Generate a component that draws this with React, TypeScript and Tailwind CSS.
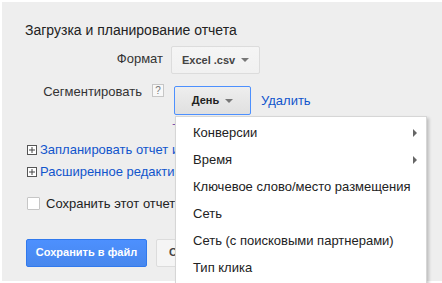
import React from "react";

const font = { fontFamily: '"Liberation Sans", Arial, sans-serif' };

function Caret() {
  return (
    <span className="ml-[6px] inline-block h-0 w-0 border-x-[4px] border-t-[4px] border-x-transparent border-t-[#777]" />
  );
}

function PlusBox() {
  return (
    <span className="mr-[3px] inline-flex h-[10px] w-[10px] items-center justify-center border border-[#555] bg-white">
      <svg width="8" height="8" viewBox="0 0 8 8">
        <path d="M4 1v6M1 4h6" stroke="#444" strokeWidth="1" />
      </svg>
    </span>
  );
}

const menuItems: { label: string; sub?: boolean }[] = [
  { label: "Конверсии", sub: true },
  { label: "Время", sub: true },
  { label: "Ключевое слово/место размещения" },
  { label: "Сеть" },
  { label: "Сеть (с поисковыми партнерами)" },
  { label: "Тип клика" },
];

export default function App() {
  return (
    <div className="h-[283px] w-[442px] overflow-hidden bg-white pl-[2px] pt-[2px] pb-[2px]" style={font}>
      <div className="relative h-full bg-[#eeeeee] pl-[23px] pt-[19px] text-[13px] text-[#222]">
        {/* Title */}
        <div className="text-[14px] leading-[18px] text-[#222]">Загрузка и планирование отчета</div>

        {/* Format row */}
        <div className="mt-[7px] flex items-center">
          <div className="relative -top-[1px] w-[139px] pr-[1px] text-right text-[#333]">Формат</div>
          <button className="ml-[7px] flex h-[28px] items-center rounded-[2px] border border-[#dcdcdc] bg-gradient-to-b from-[#f5f5f5] to-[#f1f1f1] px-[10px] text-[11px] font-bold text-[#444]">
            Excel .csv
            <Caret />
          </button>
        </div>

        {/* Segment row */}
        <div className="mt-[12px] flex items-start">
          <div className="relative -top-[2px] flex w-[139px] items-start justify-end">
            <span className="leading-[15px] text-[#333]">Сегментировать</span>
            <span className="ml-[10px] inline-flex h-[13px] w-[12px] items-center justify-center border border-[#c6c6c6] bg-[#f8f8f8] text-[10px] leading-none text-[#777]">
              ?
            </span>
          </div>
          <button className="ml-[10px] flex h-[29px] w-[77px] items-center justify-center rounded-[2px] border border-[#4d90fe] bg-gradient-to-b from-[#eeeeee] to-[#e0e0e0] text-[11px] font-bold text-[#222]">
            День
            <Caret />
          </button>
          <span className="ml-[10px] self-center text-[#1155cc]">Удалить</span>
        </div>

        {/* add segment (hidden behind menu) */}
        <div className="ml-[147px] mt-[2px] h-[16px] text-[13px] leading-[16px] text-[#7b54b1]">+ Добавить</div>

        {/* links */}
        <div className="mt-[9px] flex items-center pl-[2px] leading-[16px] text-[#1155cc]">
          <PlusBox />
          Запланировать отчет и отправить по эл. почте
        </div>
        <div className="mt-[6px] flex items-center pl-[2px] leading-[16px] text-[#1155cc]">
          <PlusBox />
          Расширенное редактирование
        </div>

        {/* checkbox */}
        <div className="mt-[14px] flex items-center pl-[2px]">
          <span className="h-[13px] w-[13px] rounded-[1px] border border-[#c6c6c6] bg-white" />
          <span className="ml-[6px]">Сохранить этот отчет</span>
        </div>

        {/* buttons */}
        <div className="mt-[25px] flex items-center pl-[1px]">
          <button className="h-[28px] w-[121px] rounded-[2px] border border-[#3079ed] bg-gradient-to-b from-[#4d90fe] to-[#4787ed] text-[11px] font-bold text-white">
            Сохранить в файл
          </button>
          <button className="ml-[9px] h-[28px] rounded-[2px] border border-[#dcdcdc] bg-[#f5f5f5] px-[12px] text-[11px] font-bold text-[#444]">
            Отмена
          </button>
        </div>

        {/* Dropdown menu */}
        <div className="absolute left-[173px] top-[114px] w-[252px] border border-[#d6d6d6] bg-white pt-[2px] pb-[4px] shadow-[2px_2px_3px_rgba(0,0,0,0.2)]">
          {menuItems.map((item) => (
            <div key={item.label} className="relative flex h-[27px] items-center pl-[17px] text-[13px] text-[#222]">
              {item.label}
              {item.sub && (
                <span className="absolute right-[9px] top-[10px] h-0 w-0 border-y-[4px] border-l-[4px] border-y-transparent border-l-[#666]" />
              )}
            </div>
          ))}
        </div>
      </div>
    </div>
  );
}
